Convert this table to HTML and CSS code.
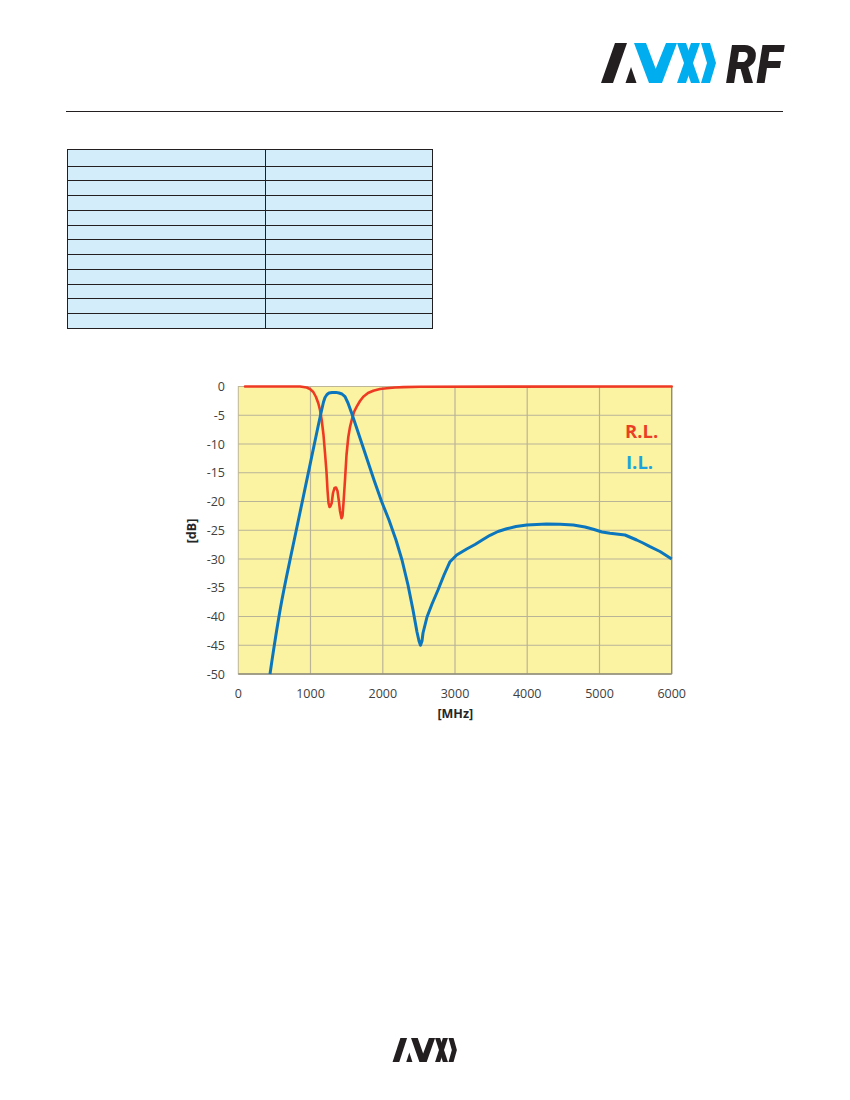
FILE: index.html
```html
<!DOCTYPE html>
<html lang="en">
<head>
<meta charset="utf-8">
<title>AVX RF – Filter response</title>
<link rel="stylesheet" href="styles.css">
</head>
<body>
<header class="top">
  <svg class="logo" width="183" height="41" viewBox="0 0 183 41" aria-label="AVX RF">
    <polygon class="ink" points="1,40 15,0 27,0 13,40"/>
    <polygon class="ink" points="25.5,40 31,24 36.5,40"/>
    <polygon class="cyan" points="34,0 46,0 55.7,25.8 66,0 77,0 62,40 49,40"/>
    <polygon class="cyan" points="77,0 86,0 100,40 91,40"/>
    <polygon class="cyan" points="77,40 86,40 100,0 91,0"/>
    <polygon class="cyan" points="101,0 110,0 116,20 110,40 101,40 107,20"/>
    <text class="rf" x="126" y="40" textLength="56" lengthAdjust="spacingAndGlyphs">RF</text>
  </svg>
</header>
<div class="rule"></div>

<div class="spec">
  <div class="cell first"></div><div class="cell first"></div>
  <div class="cell"></div><div class="cell"></div>
  <div class="cell"></div><div class="cell"></div>
  <div class="cell"></div><div class="cell"></div>
  <div class="cell"></div><div class="cell"></div>
  <div class="cell"></div><div class="cell"></div>
  <div class="cell"></div><div class="cell"></div>
  <div class="cell"></div><div class="cell"></div>
  <div class="cell"></div><div class="cell"></div>
  <div class="cell"></div><div class="cell"></div>
  <div class="cell"></div><div class="cell"></div>
  <div class="cell"></div><div class="cell"></div>
</div>

<div class="chart">
  <svg width="530" height="360" viewBox="0 0 530 360">
    <rect class="plot" x="68.3" y="16.5" width="433.4" height="287.5"/>
    <g class="grid">
      <line x1="140.5" y1="16.5" x2="140.5" y2="304"/>
      <line x1="212.8" y1="16.5" x2="212.8" y2="304"/>
      <line x1="285" y1="16.5" x2="285" y2="304"/>
      <line x1="357.2" y1="16.5" x2="357.2" y2="304"/>
      <line x1="429.5" y1="16.5" x2="429.5" y2="304"/>
      <line x1="68.3" y1="45.25" x2="501.7" y2="45.25"/>
      <line x1="68.3" y1="74" x2="501.7" y2="74"/>
      <line x1="68.3" y1="102.75" x2="501.7" y2="102.75"/>
      <line x1="68.3" y1="131.5" x2="501.7" y2="131.5"/>
      <line x1="68.3" y1="160.25" x2="501.7" y2="160.25"/>
      <line x1="68.3" y1="189" x2="501.7" y2="189"/>
      <line x1="68.3" y1="217.75" x2="501.7" y2="217.75"/>
      <line x1="68.3" y1="246.5" x2="501.7" y2="246.5"/>
      <line x1="68.3" y1="275.25" x2="501.7" y2="275.25"/>
    </g>
    <line class="frame" x1="501.7" y1="16.5" x2="501.7" y2="304"/>
    <line class="frame" x1="68.3" y1="304" x2="501.7" y2="304"/>

    <g class="ylab">
      <text x="55" y="21">0</text>
      <text x="55" y="49.7">-5</text>
      <text x="55" y="78.5">-10</text>
      <text x="55" y="107.2">-15</text>
      <text x="55" y="136">-20</text>
      <text x="55" y="164.7">-25</text>
      <text x="55" y="193.5">-30</text>
      <text x="55" y="222.2">-35</text>
      <text x="55" y="251">-40</text>
      <text x="55" y="279.7">-45</text>
      <text x="55" y="308.5">-50</text>
    </g>
    <g class="xlab">
      <text x="68.3" y="328.3">0</text>
      <text x="140.5" y="328.3">1000</text>
      <text x="212.8" y="328.3">2000</text>
      <text x="285" y="328.3">3000</text>
      <text x="357.2" y="328.3">4000</text>
      <text x="429.5" y="328.3">5000</text>
      <text x="501.7" y="328.3">6000</text>
    </g>
    <text class="axis" x="285.3" y="347.5">[MHz]</text>
    <text class="axis" transform="translate(26,161) rotate(-90)">[dB]</text>

    <polyline class="rl" points="75,16.5 130,16.5 136.7,17.5 140,19 143.3,22 146,27 148.3,33.3 150,40 151.7,50 153.5,65 155,83 156.5,102 157.5,120 158.5,133 159.5,137 160.5,136 161.7,133 163,123 164.5,118 166,117.5 167.5,121 169,132 170,141 171.5,148.3 172.5,146 173.5,133 175,110 176.5,85 178.3,67 180,57 181.7,50 184,42 186.7,36.7 190,31 193.3,26.7 198,23 203.3,20.7 210,19 216.7,18.3 225,17.5 233.3,17.1 250,16.7 501.7,16.5"/>
    <polyline class="il" points="100,304 102,290.4 104,277.2 106,264.4 108,252.2 110,240.6 112,229.6 114,219.2 116,209.2 118,199.6 121,185.3 124,171 127,156.7 130,142.5 133,128.2 136,113.9 139,99.6 142,85.3 145,71 148,56.7 150,47.5 152,38.5 153.5,32 155,27.5 157,24.5 159,23 162,22.5 166,22.4 169,23 172,24 175,26.7 178,33 181.7,43.3 186,56 192,74 198,92 204,110 211.6,131.5 219,150 226,170 232,190 238,215 243,240 247,262 249,271 250.5,275.3 252,271 253,263 257,247 262,234 268,220 274,205 280,191.7 286.7,185 296.7,179 305,174.5 313,169.5 320,165.3 328,161.5 336.7,158.8 346,156.5 356.7,155 376.7,154 390,154.2 403.3,155 415,157 423.3,159.3 432,162 440,163.3 455,165 466.7,170 473,173 480,176.7 490,181.5 501.7,189"/>

    <text class="leg-rl" x="455" y="68.3">R.L.</text>
    <text class="leg-il" x="456" y="99">I.L.</text>
  </svg>
</div>

<footer class="foot">
  <svg width="66" height="24" viewBox="0 0 118 40" preserveAspectRatio="none" aria-label="AVX">
    <polygon class="ink" points="1,40 15,0 27,0 13,40"/>
    <polygon class="ink" points="25.5,40 31,24 36.5,40"/>
    <polygon class="ink" points="34,0 46,0 55.7,25.8 66,0 77,0 62,40 49,40"/>
    <polygon class="ink" points="77,0 86,0 100,40 91,40"/>
    <polygon class="ink" points="77,40 86,40 100,0 91,0"/>
    <polygon class="ink" points="101,0 110,0 116,20 110,40 101,40 107,20"/>
  </svg>
</footer>
</body>
</html>
```

FILE: styles.css
```css
html, body {
  margin: 0;
  padding: 0;
  background: #ffffff;
}

body {
  font-family: "Open Sans", "Liberation Sans", sans-serif;
  color: #231f20;
}

.top {
  display: flex;
  justify-content: flex-end;
  padding: 43px 67px 0 0;
}

.logo {
  display: block;
  overflow: visible;
}

.ink {
  fill: #231f20;
}

.cyan {
  fill: #00aeef;
}

.rf {
  font-family: Roboto, "Liberation Sans", sans-serif;
  font-style: italic;
  font-weight: 900;
  font-size: 54px;
  fill: #231f20;
}

.rule {
  height: 1px;
  background: #231f20;
  margin: 27px 67px 0 66px;
}

.spec {
  display: grid;
  grid-template-columns: 198px 167px;
  width: 366px;
  margin: 37px 0 0 67px;
  border-top: 1px solid #231f20;
  border-left: 1px solid #231f20;
  box-sizing: border-box;
}

.cell {
  box-sizing: border-box;
  height: 14.75px;
  background: #d3edfa;
  border-right: 1px solid #231f20;
  border-bottom: 1px solid #231f20;
}

.cell.first {
  height: 16.7px;
}

.chart {
  width: 530px;
  height: 360px;
  margin: 41px 0 0 170px;
}

.chart svg {
  display: block;
}

.plot {
  fill: #fcf3a2;
  stroke: #bdb797;
  stroke-width: 1;
}

.grid line {
  stroke: #b9b398;
  stroke-width: 1.2;
}

.frame {
  stroke: #8f8b78;
  stroke-width: 1.3;
}

.ylab text {
  font-family: "Open Sans", "Liberation Sans", sans-serif;
  font-size: 12.5px;
  fill: #404040;
  text-anchor: end;
}

.xlab text {
  font-family: "Open Sans", "Liberation Sans", sans-serif;
  font-size: 12.5px;
  fill: #404040;
  text-anchor: middle;
}

.axis {
  font-family: "Open Sans", "Liberation Sans", sans-serif;
  font-size: 12.5px;
  font-weight: 700;
  fill: #262626;
  text-anchor: middle;
}

.rl {
  fill: none;
  stroke: #ee3a23;
  stroke-width: 2.6;
  stroke-linejoin: round;
  stroke-linecap: round;
}

.il {
  fill: none;
  stroke: #0b76bd;
  stroke-width: 3;
  stroke-linejoin: round;
  stroke-linecap: butt;
}

.leg-rl,
.leg-il {
  font-family: "Open Sans", "Liberation Sans", sans-serif;
  font-size: 18.5px;
  font-weight: 700;
}

.leg-rl {
  fill: #ea3f26;
}

.leg-il {
  fill: #1ba3e0;
}

.foot {
  display: flex;
  justify-content: center;
  margin-top: 308px;
}

.foot svg {
  display: block;
}
```
